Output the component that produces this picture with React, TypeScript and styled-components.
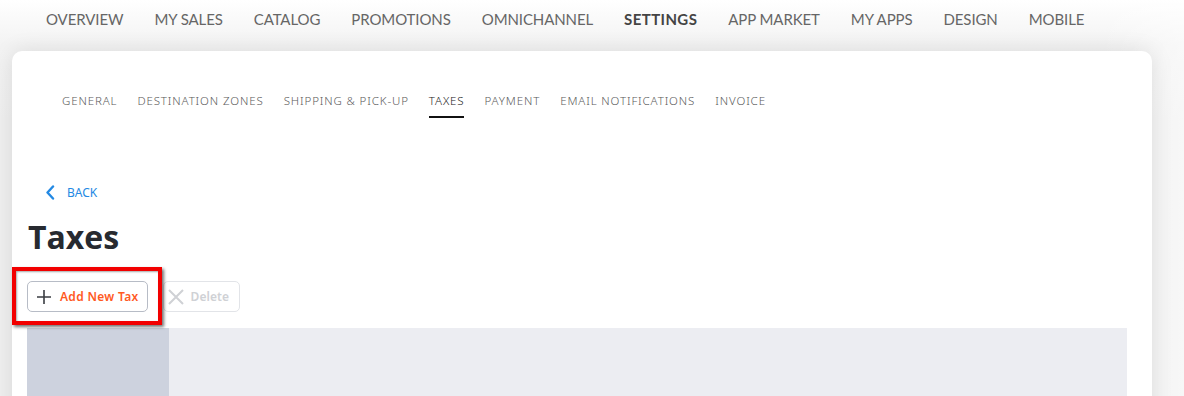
import * as React from 'react';
import styled, { createGlobalStyle } from 'styled-components';

const GlobalStyle = createGlobalStyle`
	html, body {
		margin: 0;
		padding: 0;
	}
	body {
		background: linear-gradient(180deg, #ffffff 0px, #f3f3f3 45px, #efefef 120px, #efefef 100%);
		font-family: Lato, 'Liberation Sans', sans-serif;
		overflow: hidden;
	}
`;

const Page = styled.div`
	width: 1184px;
	height: 396px;
	overflow: hidden;
	background: linear-gradient(90deg, rgba(255, 255, 255, 0) 0, rgba(255, 255, 255, 0) 1100px, rgba(255, 255, 255, 0.5) 100%);
`;

const TopNav = styled.nav`
	display: flex;
	align-items: center;
	gap: 31px;
	height: 40px;
	padding-left: 46px;
	box-sizing: border-box;
`;

const TopLink = styled.a<{ active?: boolean }>`
	font-family: Lato, 'Liberation Sans', sans-serif;
	font-size: 15px;
	text-transform: uppercase;
	color: ${(p) => (p.active ? '#444' : '#666')};
	font-weight: ${(p) => (p.active ? 700 : 400)};
	letter-spacing: ${(p) => (p.active ? '0.4px' : '-0.1px')};
	text-decoration: none;
	line-height: 18px;
	margin-top: -2px;
`;

const Card = styled.main`
	margin: 11px 0 0 12px;
	width: 1140px;
	height: 400px;
	background: #fff;
	border-radius: 10px;
	box-shadow: 0 0 22px rgba(0, 0, 0, 0.1);
	box-sizing: border-box;
	padding: 43px 25px 0 15px;
`;

const SubNav = styled.div`
	display: flex;
	gap: 20px;
	padding-left: 35px;
`;

const SubTab = styled.a<{ active?: boolean }>`
	font-family: 'Noto Sans', sans-serif;
	font-weight: 300;
	font-size: 11.5px;
	line-height: 14px;
	letter-spacing: 0.88px;
	color: ${(p) => (p.active ? '#222' : '#5a5a5a')};
	text-transform: uppercase;
	text-decoration: none;
	padding-bottom: 8px;
	border-bottom: 2px solid ${(p) => (p.active ? '#111' : 'transparent')};
`;

const BackLink = styled.a`
	display: flex;
	align-items: center;
	gap: 12px;
	margin: 67px 0 0 18px;
	height: 14px;
	font-family: 'Noto Sans', sans-serif;
	font-size: 12px;
	color: #2389e3;
	text-decoration: none;
`;

const Title = styled.h1`
	margin: 18px 0 0 1px;
	font-family: 'Open Sans', sans-serif;
	font-size: 32px;
	line-height: 40px;
	font-weight: 700;
	color: #272a30;
`;

const Actions = styled.div`
	display: flex;
	gap: 15px;
	margin-top: 24px;
`;

const Highlight = styled.div`
	position: relative;
	display: flex;
`;

const Marker = styled.span`
	position: absolute;
	left: -15px;
	top: -14px;
	right: -14px;
	bottom: -13px;
	border: 4px solid #f20000;
	box-shadow: 2px 2px 3px rgba(0, 0, 0, 0.55), inset 1px 1px 2px rgba(0, 0, 0, 0.35);
	pointer-events: none;
`;

const ActionButton = styled.button<{ disabled?: boolean }>`
	display: flex;
	align-items: center;
	gap: ${(p) => (p.disabled ? '6px' : '8px')};
	height: 31px;
	padding: ${(p) => (p.disabled ? '0 10px 0 3px' : '0 8px')};
	background: #fff;
	border: 1px solid ${(p) => (p.disabled ? '#e2e4e8' : '#b7bcc6')};
	border-radius: 5px;
	font-family: 'Noto Sans', sans-serif;
	font-weight: 600;
	font-size: 12px;
	letter-spacing: ${(p) => (p.disabled ? '0.1px' : '0.3px')};
	color: ${(p) => (p.disabled ? '#cfd1d5' : '#ff5a1f')};
	box-sizing: border-box;
	cursor: pointer;
`;

const Table = styled.div`
	display: grid;
	grid-template-columns: 142px 1fr;
	height: 120px;
	margin-top: 16px;
	background: #ecedf2;
`;

const FirstColumn = styled.div`
	background: #cdd2de;
`;

const topLinks = ['Overview', 'My Sales', 'Catalog', 'Promotions', 'Omnichannel', 'Settings', 'App Market', 'My Apps', 'Design', 'Mobile'];
const subTabs = ['General', 'Destination Zones', 'Shipping & Pick-up', 'Taxes', 'Payment', 'Email Notifications', 'Invoice'];

const App: React.FunctionComponent = () => {
	return (
		<Page>
			<GlobalStyle />
			<TopNav>
				{topLinks.map((l) => (
					<TopLink key={l} active={l === 'Settings'}>
						{l}
					</TopLink>
				))}
			</TopNav>

			<Card>
				<SubNav>
					{subTabs.map((t) => (
						<SubTab key={t} active={t === 'Taxes'}>
							{t}
						</SubTab>
					))}
				</SubNav>

				<BackLink>
					<svg width="10" height="15" viewBox="0 0 10 15">
						<path d="M8 1.5 L2.5 7.5 L8 13.5" fill="none" stroke="#2389e3" strokeWidth="2.4" strokeLinecap="round" strokeLinejoin="round" />
					</svg>
					BACK
				</BackLink>

				<Title>Taxes</Title>

				<Actions>
					<Highlight>
						<ActionButton>
							<svg width="16" height="16" viewBox="0 0 16 16">
								<path d="M8 1 V15 M1 8 H15" stroke="#3a3d42" strokeWidth="1.6" />
							</svg>
							Add New Tax
						</ActionButton>
						<Marker />
					</Highlight>
					<ActionButton disabled>
						<svg width="18" height="18" viewBox="0 0 18 18">
							<path d="M2 2 L16 16 M16 2 L2 16" stroke="#cfd1d5" strokeWidth="2" />
						</svg>
						Delete
					</ActionButton>
				</Actions>

				<Table>
					<FirstColumn />
					<div />
				</Table>
			</Card>
		</Page>
	);
};

export default App;
